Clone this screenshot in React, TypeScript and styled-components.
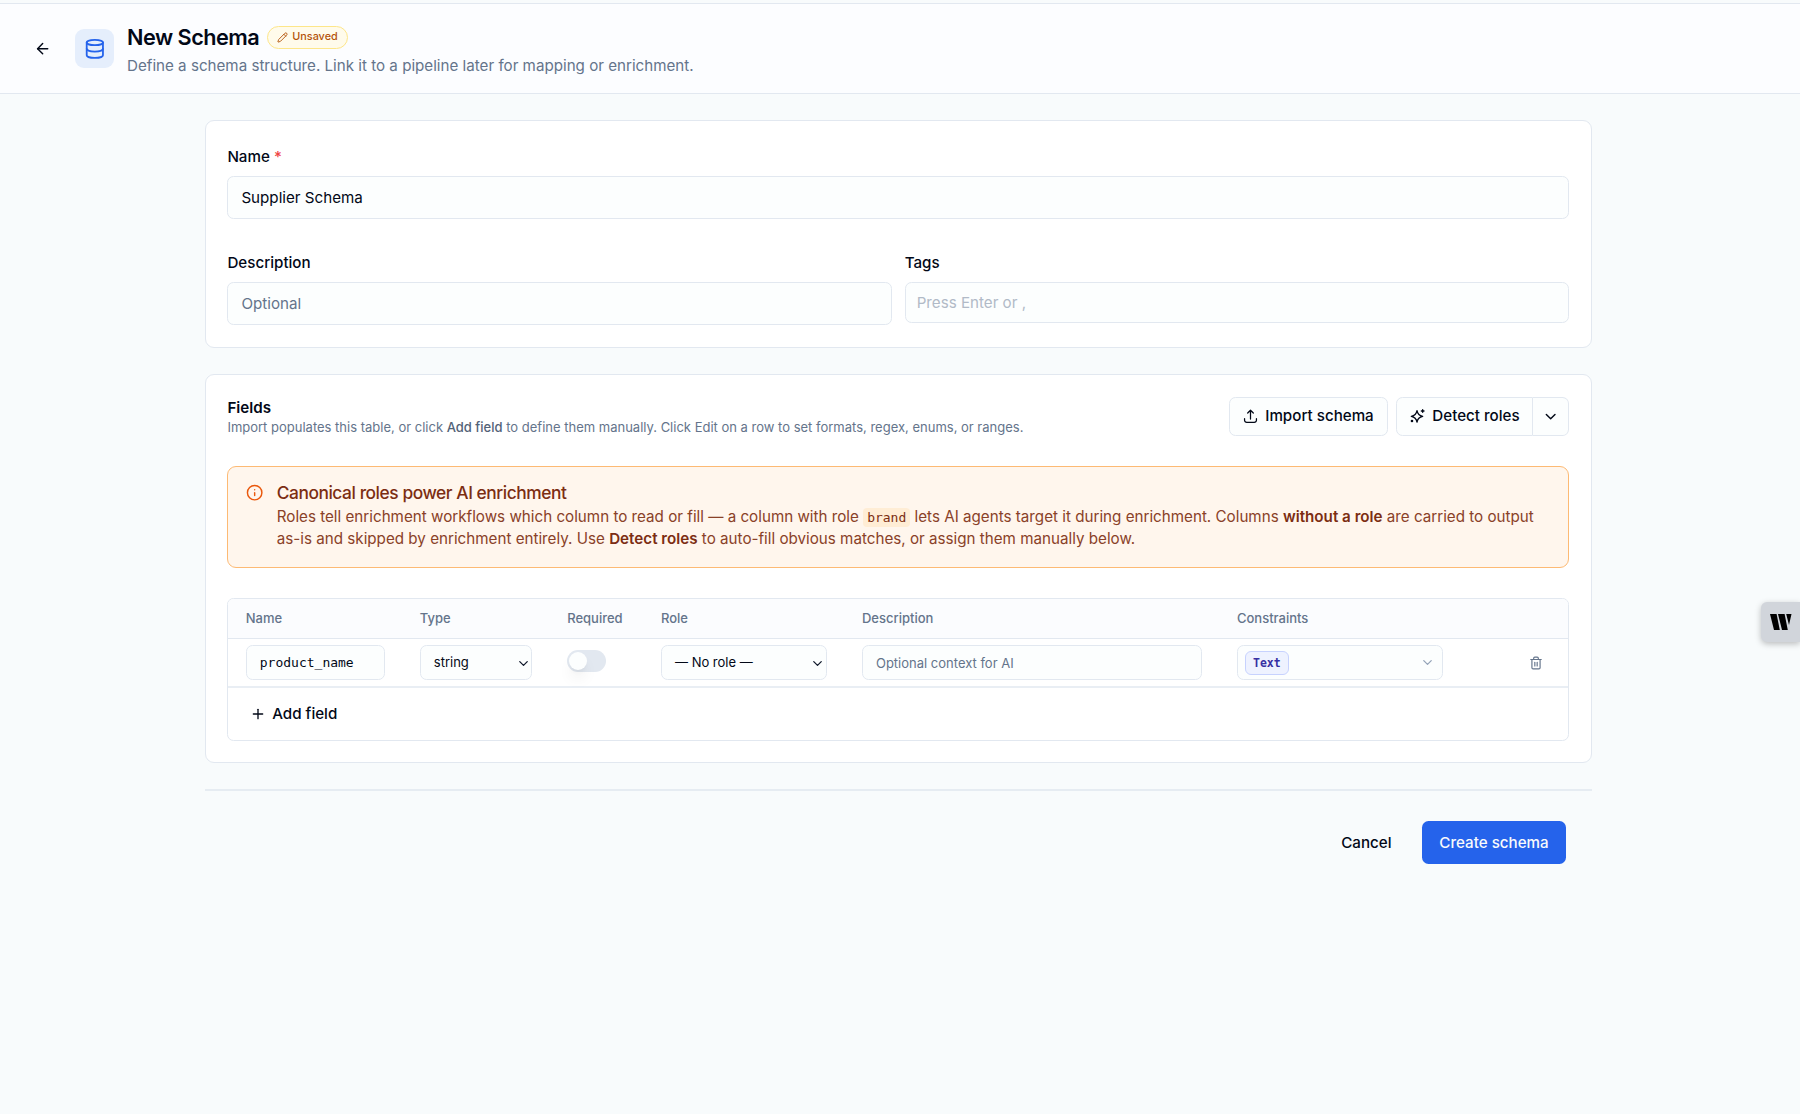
import React from "react";
import styled, { createGlobalStyle } from "styled-components";
import { ArrowLeft, ChevronDown, Database, Info, Pencil, Plus, Trash2 } from "lucide-react";

const GlobalStyle = createGlobalStyle`
  * { box-sizing: border-box; }
  body { margin: 0; background: #f8fbfc; color: #020817; font-family: Inter, "Liberation Sans", sans-serif; font-size: 15.17px; line-height: 21.67px; }
  button, input { font: inherit; color: inherit; margin: 0; }
  svg { flex: none; display: block; }
`;

const mono = `"DejaVu Sans Mono", "Liberation Mono", monospace`;

const Page = styled.div`
  height: 1114px;
  padding-top: 3px;
  overflow: hidden;
  background: #f8fbfc;
`;
const Header = styled.header`
  height: 91px;
  display: flex;
  align-items: center;
  padding: 0 34px 0 33.7px;
  border-top: 1px solid #e2e8f0;
  border-bottom: 1px solid #e2e8f0;
  background: #fcfdff;
`;
const BackButton = styled.button`
  display: flex;
  padding: 0;
  border: 0;
  background: none;
  margin-right: 24px;
`;
const IconTile = styled.div`
  width: 39px;
  height: 39px;
  border-radius: 9px;
  display: grid;
  place-items: center;
  background: #e5eefc;
  color: #2563eb;
  margin-right: 13px;
`;
const TitleBlock = styled.div`
  padding-top: 3px;
`;
const TitleRow = styled.div`
  display: flex;
  align-items: center;
  gap: 8px;
  height: 30px;
`;
const Title = styled.h1`
  margin: 0;
  font-size: 21.67px;
  font-weight: 600;
  line-height: 30px;
  letter-spacing: -0.5px;
`;
const Badge = styled.span`
  display: flex;
  align-items: center;
  gap: 4px;
  height: 23px;
  padding: 0 9px;
  border: 1px solid #fde68a;
  border-radius: 12px;
  background: #fffbeb;
  color: #b45309;
  font-size: 10.83px;
  font-weight: 500;
`;
const Subtitle = styled.p`
  margin: 0;
  height: 26px;
  line-height: 27px;
  color: #64748b;
`;
const Main = styled.main`
  width: 1387px;
  margin: 26px 0 0 205px;
  display: flex;
  flex-direction: column;
`;
const Card = styled.section<{ $h: number }>`
  height: ${(p) => p.$h}px;
  padding: 0 22px 0 21.4px;
  border: 1px solid #e2e8f0;
  border-radius: 9px;
  background: #fff;
  margin-bottom: 26px;
`;
const Columns = styled.div`
  display: grid;
  grid-template-columns: 1fr 1fr;
  gap: 13px;
`;
const Field = styled.div<{ $top: number }>`
  display: flex;
  flex-direction: column;
  padding-top: ${(p) => p.$top}px;
`;
const Label = styled.label`
  height: 22px;
  margin-bottom: 8px;
  font-weight: 500;
`;
const Required = styled.span`
  color: #ef4444;
`;
const Input = styled.input<{ $h?: number; $small?: boolean; $mono?: boolean; $muted?: string; $pad?: number }>`
  width: 100%;
  min-width: 0;
  height: ${(p) => p.$h ?? 43}px;
  padding: 0 ${(p) => p.$pad ?? 13}px;
  border: 1px solid #e2e8f0;
  border-radius: 6.5px;
  background: #fcfefe;
  outline: none;
  font-size: ${(p) => (p.$small ? 13 : 15.17)}px;
  font-family: ${(p) => (p.$mono ? mono : "inherit")};
  &::placeholder { color: ${(p) => p.$muted ?? "#64748b"}; opacity: 1; }
`;
const FieldsHead = styled.div`
  display: flex;
  justify-content: space-between;
  padding-top: 22px;
  height: 91px;
`;
const SectionTitle = styled.h2`
  margin: 0;
  font-size: 15.17px;
  font-weight: 600;
  line-height: 22px;
`;
const Hint = styled.p`
  margin: 0;
  font-size: 13px;
  line-height: 17px;
  color: #64748b;
  strong { font-weight: 500; color: #526277; }
`;
const Actions = styled.div`
  display: flex;
  gap: 8px;
`;
const OutlineButton = styled.button<{ $side?: "left" | "right"; $w: number }>`
  height: 38.6px;
  width: ${(p) => p.$w}px;
  display: flex;
  align-items: center;
  justify-content: center;
  gap: 7px;
  padding: 0;
  border: 1px solid #e2e8f0;
  border-radius: ${(p) => (p.$side === "left" ? "6.5px 0 0 6.5px" : p.$side === "right" ? "0 6.5px 6.5px 0" : "6.5px")};
  ${(p) => p.$side === "right" && "border-left: 0;"}
  background: #fcfefe;
  font-weight: 500;
`;
const SplitButton = styled.div`
  display: flex;
`;
const Alert = styled.div`
  display: flex;
  gap: 13px;
  height: 102px;
  padding: 14px 18px;
  border: 1px solid #fdba74;
  border-radius: 9px;
  background: #fff6ed;
  color: #7c2d12;
  & > svg { margin-top: 3px; color: #ea580c; }
`;
const AlertTitle = styled.div`
  height: 25px;
  font-size: 17.33px;
  line-height: 23px;
  font-weight: 500;
  letter-spacing: -0.43px;
`;
const AlertText = styled.div`
  font-size: 15.19px;
  white-space: nowrap;
  color: #8a4128;
  strong { color: #7c2d12; font-weight: 600; }
`;
const Code = styled.code`
  padding: 2px 4px;
  border-radius: 4px;
  background: #ffedd5;
  color: #7c2d12;
  font: 13px/18px ${mono};
`;
const Table = styled.div`
  margin-top: 30px;
  height: 143px;
  border: 1px solid #e2e8f0;
  border-radius: 6.5px;
  overflow: hidden;
`;
const Row = styled.div<{ $head?: boolean }>`
  display: grid;
  grid-template-columns: 139px 112.4px 58.8px 166px 340px 206.4px 1fr;
  column-gap: 35px;
  align-items: center;
  padding: ${(p) => (p.$head ? 1 : 0)}px 17px 0 17.4px;
  height: ${(p) => (p.$head ? 40 : 49)}px;
  border-bottom: ${(p) => (p.$head ? "1px solid #e2e8f0" : "2px solid #e9eef4")};
  background: ${(p) => (p.$head ? "#fbfcfe" : "#fff")};
  color: ${(p) => (p.$head ? "#64748b" : "inherit")};
  font-size: 13px;
  font-weight: ${(p) => (p.$head ? 500 : 400)};
`;
const Select = styled.div<{ $pr: number; $pl: number; $muted?: boolean }>`
  display: flex;
  align-items: center;
  justify-content: space-between;
  height: 35px;
  padding: ${(p) => (p.$muted ? 0 : 1)}px ${(p) => p.$pr}px 0 ${(p) => p.$pl}px;
  border: 1px solid #e2e8f0;
  border-radius: 6.5px;
  background: #fcfefe;
  & > svg { color: ${(p) => (p.$muted ? "#94a3b8" : "#0f172a")}; }
`;
const Switch = styled.div`
  width: 39px;
  height: 22px;
  margin-bottom: 4px;
  padding: 2px;
  border-radius: 11px;
  background: #e2e8f0;
`;
const Knob = styled.div`
  width: 18px;
  height: 18px;
  border-radius: 50%;
  background: #fcfefe;
  box-shadow: 0 10px 15px -3px rgba(0, 0, 0, 0.1), 0 4px 6px -4px rgba(0, 0, 0, 0.1);
`;
const TypeChip = styled.span`
  display: flex;
  align-items: center;
  height: 24px;
  padding: 0 7px;
  border: 1px solid #c7d2fe;
  border-radius: 6px;
  background: #eef2ff;
  color: #3730a3;
  font: 700 11.5px/22px ${mono};
`;
const Remove = styled.button`
  display: flex;
  justify-content: flex-end;
  padding: 0 8.5px 0 0;
  border: 0;
  background: none;
  color: #64748b;
`;
const AddField = styled.button`
  display: flex;
  align-items: center;
  gap: 6.5px;
  height: 51px;
  padding: 0 0 0 21.3px;
  border: 0;
  background: none;
  font-weight: 500;
`;
const Footer = styled.footer`
  display: flex;
  justify-content: flex-end;
  align-items: center;
  gap: 30.5px;
  height: 103px;
  padding: 2px 26px 0 0;
  border-top: 2px solid #e6ecf2;
  font-weight: 500;
`;
const PlainButton = styled.button`
  border: 0;
  padding: 0;
  background: none;
`;
const PrimaryButton = styled.button`
  width: 144px;
  height: 43px;
  padding: 0;
  border: 0;
  border-radius: 6.5px;
  background: #2563eb;
  color: #f8fafc;
`;
const SideTab = styled.div`
  position: absolute;
  left: 1761px;
  top: 602px;
  width: 39px;
  height: 40px;
  border-radius: 6px 0 0 6px;
  display: flex;
  align-items: center;
  padding-left: 9px;
  background: #d1d5db;
  box-shadow: 0 2px 6px rgba(0, 0, 0, 0.25);
`;
const StrokeIcon = styled.svg`
  fill: none;
  stroke: currentColor;
  stroke-width: 2;
  stroke-linecap: round;
  stroke-linejoin: round;
`;

const UploadIcon = () => (
  <StrokeIcon width="15" height="15" viewBox="0 0 24 24">
    <path d="M12 2.5V16M7.5 6.5 12 2l4.5 4.5M2.5 15.5V18A3.5 3.5 0 0 0 6 21.5h12a3.5 3.5 0 0 0 3.5-3.5v-2.5" />
  </StrokeIcon>
);

const SparkleIcon = () => (
  <StrokeIcon width="16" height="16" viewBox="0 0 24 24">
    <path d="M12 4c1 5.2 3.300 7.500 8.500 8.500-5.200 1-7.500 3.300-8.500 8.500-1-5.200-3.300-7.500-8.500-8.500 5.200-1 7.500-3.300 8.500-8.500zM20.500 2.500v4M22.500 4.500h-4" />
    <circle cx="4.5" cy="19.5" r="1" />
  </StrokeIcon>
);

export default function App() {
  return (
    <Page>
      <GlobalStyle />
      <Header>
        <BackButton aria-label="Back"><ArrowLeft size={17.33} /></BackButton>
        <IconTile><Database size={21.67} /></IconTile>
        <TitleBlock>
          <TitleRow>
            <Title>New Schema</Title>
            <Badge><Pencil size={11} />Unsaved</Badge>
          </TitleRow>
          <Subtitle>Define a schema structure. Link it to a pipeline later for mapping or enrichment.</Subtitle>
        </TitleBlock>
      </Header>
      <Main>
        <Card $h={228}>
          <Field $top={25}>
            <Label>Name <Required>*</Required></Label>
            <Input defaultValue="Supplier Schema" />
          </Field>
          <Columns>
            <Field $top={33}>
              <Label>Description</Label>
              <Input placeholder="Optional" />
            </Field>
            <Field $top={33}>
              <Label>Tags</Label>
              <Input $h={41} $pad={11} $muted="#b1bac7" placeholder="Press Enter or ," />
            </Field>
          </Columns>
        </Card>
        <Card $h={389}>
          <FieldsHead>
            <div>
              <SectionTitle>Fields</SectionTitle>
              <Hint>Import populates this table, or click <strong>Add field</strong> to define them manually. Click Edit on a row to set formats, regex, enums, or ranges.</Hint>
            </div>
            <Actions>
              <OutlineButton $w={159}><UploadIcon />Import schema</OutlineButton>
              <SplitButton>
                <OutlineButton $side="left" $w={137}><SparkleIcon />Detect roles</OutlineButton>
                <OutlineButton $side="right" $w={36} aria-label="More"><ChevronDown size={17.33} /></OutlineButton>
              </SplitButton>
            </Actions>
          </FieldsHead>
          <Alert>
            <Info size={17.33} />
            <div>
              <AlertTitle>Canonical roles power AI enrichment</AlertTitle>
              <AlertText>
                Roles tell enrichment workflows which column to read or fill — a column with role <Code>brand</Code> lets AI agents target it during enrichment. Columns <strong>without a role</strong> are carried to output<br />
                as-is and skipped by enrichment entirely. Use <strong>Detect roles</strong> to auto-fill obvious matches, or assign them manually below.
              </AlertText>
            </div>
          </Alert>
          <Table>
            <Row $head>
              <span>Name</span><span>Type</span><span>Required</span><span>Role</span><span>Description</span><span>Constraints</span><span />
            </Row>
            <Row>
              <Input $h={35} $small $mono defaultValue="product_name" />
              <Select $pl={13} $pr={0.5}>string<ChevronDown size={15} /></Select>
              <Switch><Knob /></Switch>
              <Select $pl={13} $pr={0.5}>— No role —<ChevronDown size={15} /></Select>
              <Input $h={35} $small placeholder="Optional context for AI" />
              <Select $pl={7} $pr={7} $muted><TypeChip>Text</TypeChip><ChevronDown size={15} /></Select>
              <Remove aria-label="Delete"><Trash2 size={14} /></Remove>
            </Row>
            <AddField><Plus size={16} />Add field</AddField>
          </Table>
        </Card>
        <Footer>
          <PlainButton>Cancel</PlainButton>
          <PrimaryButton>Create schema</PrimaryButton>
        </Footer>
      </Main>
      <SideTab>
        <svg width="22" height="16" viewBox="0 0 22 16" fill="#000">
          <path d="M0 0h6.6l3.2 16H4z M8 0h6.600l3.200 16H12z M16.200 0H21.500l-2.500 11z" />
        </svg>
      </SideTab>
    </Page>
  );
}
